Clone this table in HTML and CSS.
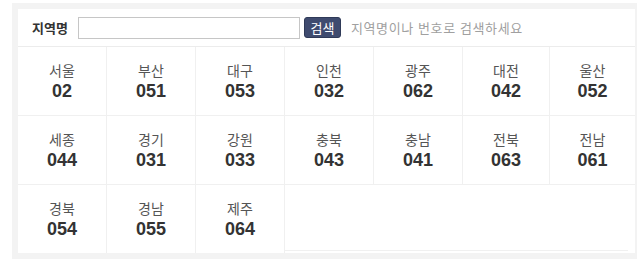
FILE: index.html
```html
<!DOCTYPE html>
<html lang="ko">
<head>
<meta charset="utf-8">
<link rel="stylesheet" href="styles.css">
</head>
<body>
<div class="frame">
  <div class="panel">
    <div class="search">
      <span class="label">지역명</span>
      <input class="field" type="text">
      <button class="btn">검색</button>
      <span class="hint">지역명이나 번호로 검색하세요</span>
    </div>
    <div class="grid">
      <div class="cell"><div class="name">서울</div><div class="code">02</div></div>
      <div class="cell"><div class="name">부산</div><div class="code">051</div></div>
      <div class="cell"><div class="name">대구</div><div class="code">053</div></div>
      <div class="cell"><div class="name">인천</div><div class="code">032</div></div>
      <div class="cell"><div class="name">광주</div><div class="code">062</div></div>
      <div class="cell"><div class="name">대전</div><div class="code">042</div></div>
      <div class="cell"><div class="name">울산</div><div class="code">052</div></div>
      <div class="cell"><div class="name">세종</div><div class="code">044</div></div>
      <div class="cell"><div class="name">경기</div><div class="code">031</div></div>
      <div class="cell"><div class="name">강원</div><div class="code">033</div></div>
      <div class="cell"><div class="name">충북</div><div class="code">043</div></div>
      <div class="cell"><div class="name">충남</div><div class="code">041</div></div>
      <div class="cell"><div class="name">전북</div><div class="code">063</div></div>
      <div class="cell"><div class="name">전남</div><div class="code">061</div></div>
      <div class="cell last"><div class="name">경북</div><div class="code">054</div></div>
      <div class="cell last"><div class="name">경남</div><div class="code">055</div></div>
      <div class="cell last"><div class="name">제주</div><div class="code">064</div></div>
      <div class="filler"></div>
    </div>
  </div>
</div>
</body>
</html>
```
FILE: styles.css
```css
html, body {
  margin: 0;
  padding: 0;
  background: #fff;
  overflow: hidden;
}
body {
  font-family: "Noto Sans CJK KR", "Liberation Sans", sans-serif;
}
.frame {
  margin: 3px 0 0 12px;
  width: 617px;
  padding: 6px;
  background: #f3f3f3;
}
.panel {
  background: #fff;
}
.search {
  display: flex;
  align-items: center;
  height: 37px;
  padding-left: 14px;
  border-bottom: 1px solid #ececec;
  box-sizing: content-box;
}
.label {
  font-size: 13px;
  font-weight: bold;
  color: #333;
  width: 38px;
  margin-right: 8px;
  white-space: nowrap;
}
.field {
  width: 222px;
  height: 22px;
  box-sizing: border-box;
  border: 1px solid #c6c6c6;
  margin: 0 4px 0 0;
  padding: 0 4px;
  background: #fff;
}
.btn {
  width: 37px;
  height: 21px;
  border: 1px solid #2f3a58;
  border-radius: 3px;
  background: #3f4b6f;
  color: #fff;
  font-family: "Noto Sans CJK KR", sans-serif;
  font-size: 13px;
  line-height: 19px;
  padding: 0;
  margin-right: 10px;
}
.hint {
  font-size: 13px;
  letter-spacing: 0.6px;
  color: #a0a0a0;
  white-space: nowrap;
}
.grid {
  display: grid;
  grid-template-columns: 89px 89px 89px 89px 89px 87px 1fr;
}
.cell {
  height: 69px;
  padding-top: 13px;
  box-sizing: border-box;
  border-right: 1px solid #f0f0f0;
  border-bottom: 1px solid #f0f0f0;
  text-align: center;
}
.cell:nth-child(7n) {
  border-right: none;
}
.cell.last {
  border-bottom: none;
  height: 68px;
}
.name {
  font-size: 14px;
  line-height: 20px;
  color: #555;
}
.code {
  font-family: "Liberation Sans", Arial, sans-serif;
  font-size: 18px;
  font-weight: bold;
  line-height: 22px;
  color: #333;
}
.filler {
  grid-column: 4 / 8;
  border-bottom: 1px solid #f0f0f0;
  margin: 0 7px 2px 0;
}
```
